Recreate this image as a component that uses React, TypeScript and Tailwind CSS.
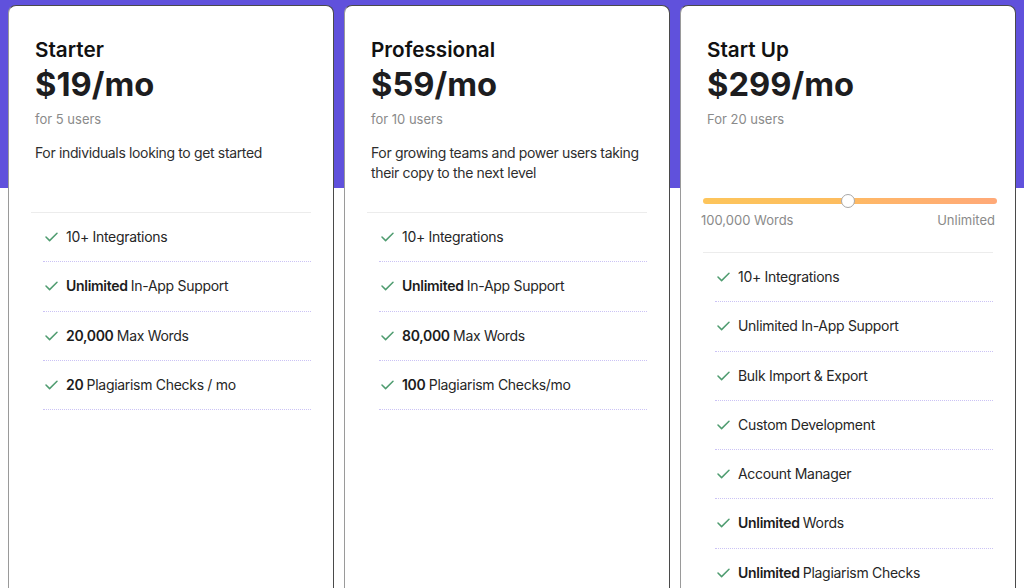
import React from "react";

function Check() {
  return (
    <svg width="13" height="10" viewBox="0 0 13 10" className="shrink-0">
      <polyline points="1,5 4.6,8.6 12,1.2" fill="none" stroke="#4f9c70" strokeWidth="1.5" strokeLinecap="round" strokeLinejoin="round" />
    </svg>
  );
}

type Feature = { bold?: string; text: string };

function Features({ items }: { items: Feature[] }) {
  return (
    <ul className="pl-[12px]">
      {items.map((f, i) => (
        <li
          key={i}
          className="flex items-center gap-[8px] pl-[2px] py-[14px] leading-[20.25px] text-[14px] tracking-[-0.3px] text-[#262626] border-b border-dotted border-[#cbc3f5]"
        >
          <Check />
          <span>
            {f.bold && <span className="font-semibold text-[#1c1c1c]">{f.bold} </span>}
            {f.text}
          </span>
        </li>
      ))}
    </ul>
  );
}

function Header({ title, price, users }: { title: string; price: string; users: string }) {
  return (
    <div className="pl-[4px] pt-[30px]">
      <div className="text-[20.7px] leading-[28px] font-semibold text-[#111]">{title}</div>
      <div className="text-[32.7px] leading-[40px] font-bold text-[#1d1d1f]">{price}</div>
      <div className="mt-[5px] text-[13px] leading-[20px] text-[#8a8a8a]">{users}</div>
    </div>
  );
}

function Card({
  width,
  title,
  price,
  users,
  desc,
  features,
}: {
  width: string;
  title: string;
  price: string;
  users: string;
  desc: string;
  features: Feature[];
}) {
  return (
    <div className={`${width} h-[600px] shrink-0 bg-white rounded-t-[8px] border border-[#4a4a4a] border-l-[#9a9a9a] px-[22px]`}>
      <div className="h-[206px]">
        <Header title={title} price={price} users={users} />
        <p className="pl-[4px] mt-[14px] text-[14px] leading-[19.5px] tracking-[-0.35px] text-[#2e2e2e]">{desc}</p>
      </div>
      <div className="h-px bg-[#ececec]" />
      <Features items={features} />
    </div>
  );
}

export default function App() {
  return (
    <div
      className="h-[588px] w-[1024px] overflow-hidden bg-[linear-gradient(to_bottom,#6051dc_0px,#6051dc_188px,#ffffff_188px)] pt-[5px] pl-[8px] flex gap-[10px]"
      style={{ fontFamily: "Inter, 'Noto Sans', sans-serif" }}
    >
      <Card
        width="w-[326px]"
        title="Starter"
        price="$19/mo"
        users="for 5 users"
        desc="For individuals looking to get started"
        features={[
          { text: "10+ Integrations" },
          { bold: "Unlimited", text: "In-App Support" },
          { bold: "20,000", text: "Max Words" },
          { bold: "20", text: "Plagiarism Checks / mo" },
        ]}
      />
      <Card
        width="w-[326px]"
        title="Professional"
        price="$59/mo"
        users="for 10 users"
        desc="For growing teams and power users taking their copy to the next level"
        features={[
          { text: "10+ Integrations" },
          { bold: "Unlimited", text: "In-App Support" },
          { bold: "80,000", text: "Max Words" },
          { bold: "100", text: "Plagiarism Checks/mo" },
        ]}
      />
      <div className="w-[336px] h-[600px] shrink-0 bg-white rounded-t-[8px] border border-[#4a4a4a] border-l-[#9a9a9a] px-[22px]">
        <div className="h-[246px]">
          <Header title="Start Up" price="$299/mo" users="For 20 users" />
          <div className="mt-[69px] mr-[-4px]">
            <div className="relative h-[6px] rounded-full bg-[linear-gradient(to_right,#fdc55b_0%,#fdbd5f_45%,#ffb56a_60%,#ffa978_100%)]">
              <div className="absolute left-[138px] top-[-4px] w-[14px] h-[14px] rounded-full bg-white border border-[#a8a8a8]" />
            </div>
            <div className="mt-[6px] flex justify-between text-[13px] leading-[20px] text-[#8a8a8a] ml-[-2px] mr-[2px]">
              <span>100,000 Words</span>
              <span>Unlimited</span>
            </div>
          </div>
        </div>
        <div className="h-px bg-[#ececec]" />
        <Features
          items={[
            { text: "10+ Integrations" },
            { text: "Unlimited In-App Support" },
            { text: "Bulk Import & Export" },
            { text: "Custom Development" },
            { text: "Account Manager" },
            { bold: "Unlimited", text: "Words" },
            { bold: "Unlimited", text: "Plagiarism Checks" },
          ]}
        />
      </div>
    </div>
  );
}
